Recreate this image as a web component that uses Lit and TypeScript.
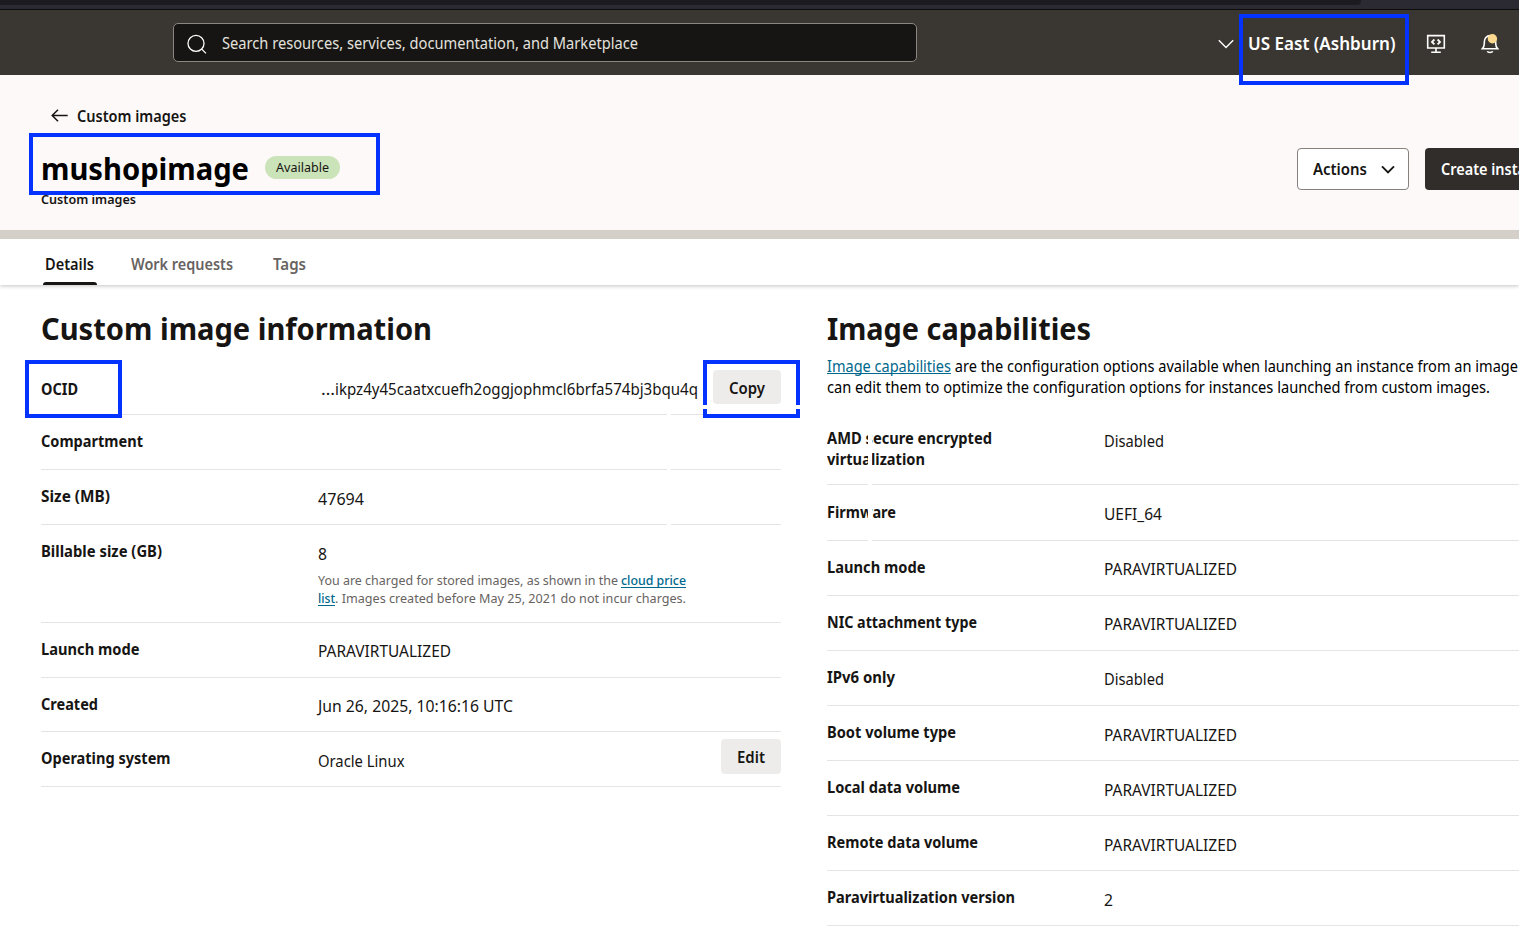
import { LitElement, html, css, nothing } from "lit";
import { customElement, property } from "lit/decorators.js";

/** One line of text set to an exact measure. */
@customElement("fit-text")
class FitText extends LitElement {
  @property() text = "";
  @property({ type: Number }) w = 0;
  static styles = css`
    :host { display: inline-block; white-space: pre; vertical-align: top; }
    span { display: inline-block; transform-origin: 0 50%; }
  `;
  render() {
    return html`<span>${this.text}</span>`;
  }
  updated() {
    const span = this.renderRoot.querySelector("span") as HTMLElement;
    const natural = span.offsetWidth;
    if (!this.w || !natural) return;
    this.style.width = `${this.w}px`;
    span.style.transform = `scaleX(${this.w / span.getBoundingClientRect().width})`;
  }
}

const fit = (text: string, w: number) => html`<fit-text .text=${text} .w=${w}></fit-text>`;

type Row = {
  label: [string, number][];
  value?: [string, number];
  h: number;
  top?: number;
  vtop?: number;
  note?: boolean;
  action?: [string, number];
};

const INFO: Row[] = [
  { label: [["Compartment", 102]], h: 55 },
  { label: [["Size (MB)", 69]], value: ["47694", 46], h: 55 },
  { label: [["Billable size (GB)", 121]], value: ["8", 9], h: 98, note: true },
  { label: [["Launch mode", 98.5]], value: ["PARAVIRTUALIZED", 133], h: 55, vtop: 18 },
  { label: [["Created", 57]], value: ["Jun 26, 2025, 10:16:16 UTC", 195], h: 54, vtop: 18 },
  { label: [["Operating system", 129.5]], value: ["Oracle Linux", 86.5], h: 55, action: ["Edit", 28] },
];

const CAPS: Row[] = [
  { label: [["AMD secure encrypted", 165], ["virtualization", 98]], value: ["Disabled", 60], h: 75, top: 18, vtop: 21 },
  { label: [["Firmware", 69]], value: ["UEFI_64", 58], h: 56, top: 17 },
  { label: [["Launch mode", 98.5]], value: ["PARAVIRTUALIZED", 133], h: 55, vtop: 18 },
  { label: [["NIC attachment type", 150]], value: ["PARAVIRTUALIZED", 133], h: 55, vtop: 18 },
  { label: [["IPv6 only", 68]], value: ["Disabled", 60], h: 55, vtop: 18 },
  { label: [["Boot volume type", 129]], value: ["PARAVIRTUALIZED", 133], h: 55 },
  { label: [["Local data volume", 133]], value: ["PARAVIRTUALIZED", 133], h: 55 },
  { label: [["Remote data volume", 151]], value: ["PARAVIRTUALIZED", 133], h: 55 },
  { label: [["Paravirtualization version", 188]], value: ["2", 9], h: 55 },
];

@customElement("app-root")
class AppRoot extends LitElement {
  static styles = css`
    :host {
      display: block; position: relative; width: 1519px; height: 945px; overflow: hidden;
      background: #fff; color: #161513;
      font: 400 15.5px/21px "Noto Sans", "Open Sans", sans-serif;
    }
    * { box-sizing: border-box; }
    svg { display: block; flex: none; fill: none; }
    .chrome { height: 10px; background: #2b2a33; border-bottom: 1px solid #0c0c0d; }
    .chrome i { display: block; width: 1361px; height: 5px; background: #1c1b22; border-radius: 0 0 4px 0; }
    .top { display: flex; height: 65px; padding: 13px 20px 0 173px; background: #3a3631; color: #fff; }
    .search {
      display: flex; align-items: center; gap: 15px; width: 744px; height: 39px; padding: 2px 0 0 13px;
      background: #161513; border: 1px solid #8b8680; border-radius: 5px; color: #e3e1dd;
    }
    .search fit-text { margin-top: -1px; }
    .tools { display: flex; align-items: center; height: 42px; margin-left: auto; }
    .region { margin: -3px 0 0 14px; font-size: 18px; font-weight: 600; line-height: 26px; }
    .dev { margin-left: 31px; }
    .bell { margin-left: 35px; }
    .hero { display: flex; height: 155px; background: #fdf9f8; padding: 0 0 0 41px; }
    .ident { flex: 1; }
    .back { display: flex; gap: 8px; padding: 31px 0 0 10px; font-weight: 600; }
    .name { display: flex; gap: 16px; height: 44px; margin-top: 20px; color: #000; }
    h1, h2 { margin: 0; font-size: 31px; font-weight: 700; line-height: 42px; }
    .badge { margin-top: 9px; height: 23px; padding: 1px 11px; border-radius: 12px; background: #cbe3b8; font-size: 12.8px; color: #161513; }
    .sub { margin-top: -2px; font-size: 13px; line-height: 20px; font-weight: 600; }
    .acts { display: flex; gap: 16px; width: 222px; padding-top: 73px; overflow: hidden; }
    .btn { display: flex; flex: none; align-items: center; height: 42px; padding: 0 15px; border-radius: 4px; font-weight: 600; white-space: nowrap; }
    .menu { gap: 14px; width: 112px; border: 1px solid #86817d; background: #fff; }
    .main { width: 150px; padding: 0 16px; background: #312d2a; color: #fff; }
    .band { height: 9px; background: #d4cfc8; }
    .tabs {
      display: flex; gap: 36px; height: 46px; padding-left: 43px; font-weight: 600; color: #676361;
      box-shadow: 0 1px 4px rgba(0,0,0,.24); clip-path: inset(0 0 -8px 0);
    }
    .tab { padding-top: 15px; }
    .tab.on { display: grid; width: 54px; margin-right: -2px; padding-left: 2px; color: #161513; }
    .tab.on::after { content: ""; align-self: end; width: 54px; height: 3px; margin-left: -2px; background: #161513; border-radius: 3px 3px 0 0; }
    .tab:last-child { margin-left: 4px; }
    .cols { display: grid; grid-template-columns: 740px 692px; gap: 46px; padding: 22px 0 0 41px; }
    .ocid { display: flex; justify-content: space-between; height: 66px; border-bottom: 1px solid #e4e4e4; font-weight: 700; padding-top: 30px; }
    .ocid .id { display: flex; font-weight: 400; }
    .chip { display: grid; place-items: center; height: 35px; padding-top: 1px; background: #edeceb; border-radius: 4px; font-weight: 600; }
    .copy { width: 68px; height: 34px; margin: -9px 0 0 15.5px; padding-top: 2px; }
    .edit { width: 60px; margin: 7px 0 0 auto; padding-top: 2px; }
    .row { display: grid; grid-template-columns: 277px 1fr auto; border-bottom: 1px solid #e4e4e4; }
    .label { font-weight: 700; display: grid; align-content: start; }
    .note { padding-top: 6px; font-size: 12.8px; line-height: 18px; color: #67635f; }
    .note div, .para div { display: flex; white-space: nowrap; }
    .link { height: 17px; color: #00688c; border-bottom: 1px solid #00688c; }
    .note .link { font-weight: 500; }
    .para { height: 61px; padding-top: 7px; color: #000; }
    .para .link { height: 18px; }
    .mark { position: absolute; border: 4px solid #0433ff; }
    .m1 { left: 1239px; top: 14px; width: 170px; height: 71px; }
    .m2 { left: 29px; top: 133px; width: 351px; height: 62px; }
    .m3 { left: 25px; top: 360px; width: 97px; height: 58px; }
    .m4 { left: 703px; top: 360px; width: 97px; height: 58px; }
    .m5 { left: 667px; top: 405px; width: 205px; height: 145px; border-color: #fff; }
  `;

  private row(r: Row) {
    return html`<div class="row" style="height:${r.h}px">
      <div class="label" style="padding-top:${r.top ?? 16}px">${r.label.map(([t, w]) => fit(t, w))}</div>
      <div style="padding-top:${r.vtop ?? 19}px">
        ${r.value ? fit(...r.value) : nothing}
        ${r.note
          ? html`<div class="note">
              <div>${fit("You are charged for stored images, as shown in the", 300)}<span>&nbsp;</span><span class="link">${fit("cloud price", 65)}</span></div>
              <div><span class="link">${fit("list", 17)}</span>${fit(". Images created before May 25, 2021 do not incur charges.", 351)}</div>
            </div>`
          : nothing}
      </div>
      ${r.action ? html`<div class="chip edit">${fit(...r.action)}</div>` : nothing}
    </div>`;
  }

  render() {
    return html`
      <div class="chrome"><i></i></div>
      <header class="top">
        <div class="search">
          <svg width="20" height="20" viewBox="0 0 20 20" stroke="#fff" stroke-width="1.3"><circle cx="9" cy="9.4" r="8" /><path d="M14.7 15.1l4.3 4.3" /></svg>
          ${fit("Search resources, services, documentation, and Marketplace", 416)}
        </div>
        <div class="tools">
          <svg width="16" height="10" viewBox="0 0 16 10" stroke="#fff" stroke-width="1.4"><path d="M.8 1.2L8 8.4l7.2-7.2" /></svg>
          <div class="region">${fit("US East (Ashburn)", 147.5)}</div>
          <svg class="dev" width="20" height="20" viewBox="0 0 20 20" stroke="#fff" stroke-width="1.6">
            <path d="M1.7 1.6h16.6v12.4H1.7zM10 14v4.2M5.2 18.2h9.6" /><path stroke-width="1.8" d="M8.4 5.5L6 7.9l2.4 2.4M11.6 5.5L14 7.9l-2.4 2.4" />
          </svg>
          <svg class="bell" width="18" height="20" viewBox="0 0 18 20" stroke="#fff" stroke-width="1.6">
            <path d="M1.3 14.8h15.4c-1.6-1.4-2-2.8-2-5.2V8C14.7 4.5 12.4 1.6 9 1.6S3.3 4.5 3.3 8v1.6c0 2.4-.4 3.8-2 5.2zM6.3 17.3c.6 1.5 4.8 1.5 5.4 0" />
            <circle cx="11.4" cy="4.7" r="4.7" fill="#fbd98f" stroke="none" />
          </svg>
        </div>
      </header>
      <section class="hero">
        <div class="ident">
          <div class="back">
            <svg width="18" height="18" viewBox="0 0 18 18" stroke="#161513" stroke-width="1.5"><path d="M16.7 9.5H1.2M7 3.7L1.2 9.5 7 15.3" /></svg>
            ${fit("Custom images", 109.5)}
          </div>
          <div class="name"><h1>${fit("mushopimage", 208)}</h1><span class="badge">${fit("Available", 53)}</span></div>
          <div class="sub">${fit("Custom images", 95)}</div>
        </div>
        <div class="acts">
          <div class="btn menu">${fit("Actions", 54)}
            <svg width="14" height="9" viewBox="0 0 14 9" stroke="#161513" stroke-width="1.9"><path d="M1 1.3l6 6 6-6" /></svg>
          </div>
          <div class="btn main">${fit("Create instance", 110)}</div>
        </div>
      </section>
      <div class="band"></div>
      <nav class="tabs">
        <div class="tab on">${fit("Details", 49)}</div>
        <div class="tab">${fit("Work requests", 102)}</div>
        <div class="tab">${fit("Tags", 33)}</div>
      </nav>
      <main class="cols">
        <section>
          <h2>${fit("Custom image information", 391)}</h2>
          <div class="ocid">
            ${fit("OCID", 37)}
            <div class="id">${fit("…", 14)}${fit("ikpz4y45caatxcuefh2oggjophmcl6brfa574bj3bqu4q", 363)}<div class="chip copy">${fit("Copy", 36)}</div></div>
          </div>
          ${INFO.map((r) => this.row(r))}
        </section>
        <section>
          <h2>${fit("Image capabilities", 264)}</h2>
          <div class="para">
            <div><span class="link">${fit("Image capabilities", 124)}</span>${fit(" are the configuration options available when launching an instance from an image", 567)}</div>
            <div>${fit("can edit them to optimize the configuration options for instances launched from custom images.", 663)}</div>
          </div>
          ${CAPS.map((r) => this.row(r))}
        </section>
      </main>
      <div class="mark m1"></div>
      <div class="mark m2"></div>
      <div class="mark m3"></div>
      <div class="mark m4"></div>
      <div class="mark m5"></div>
    `;
  }
}
